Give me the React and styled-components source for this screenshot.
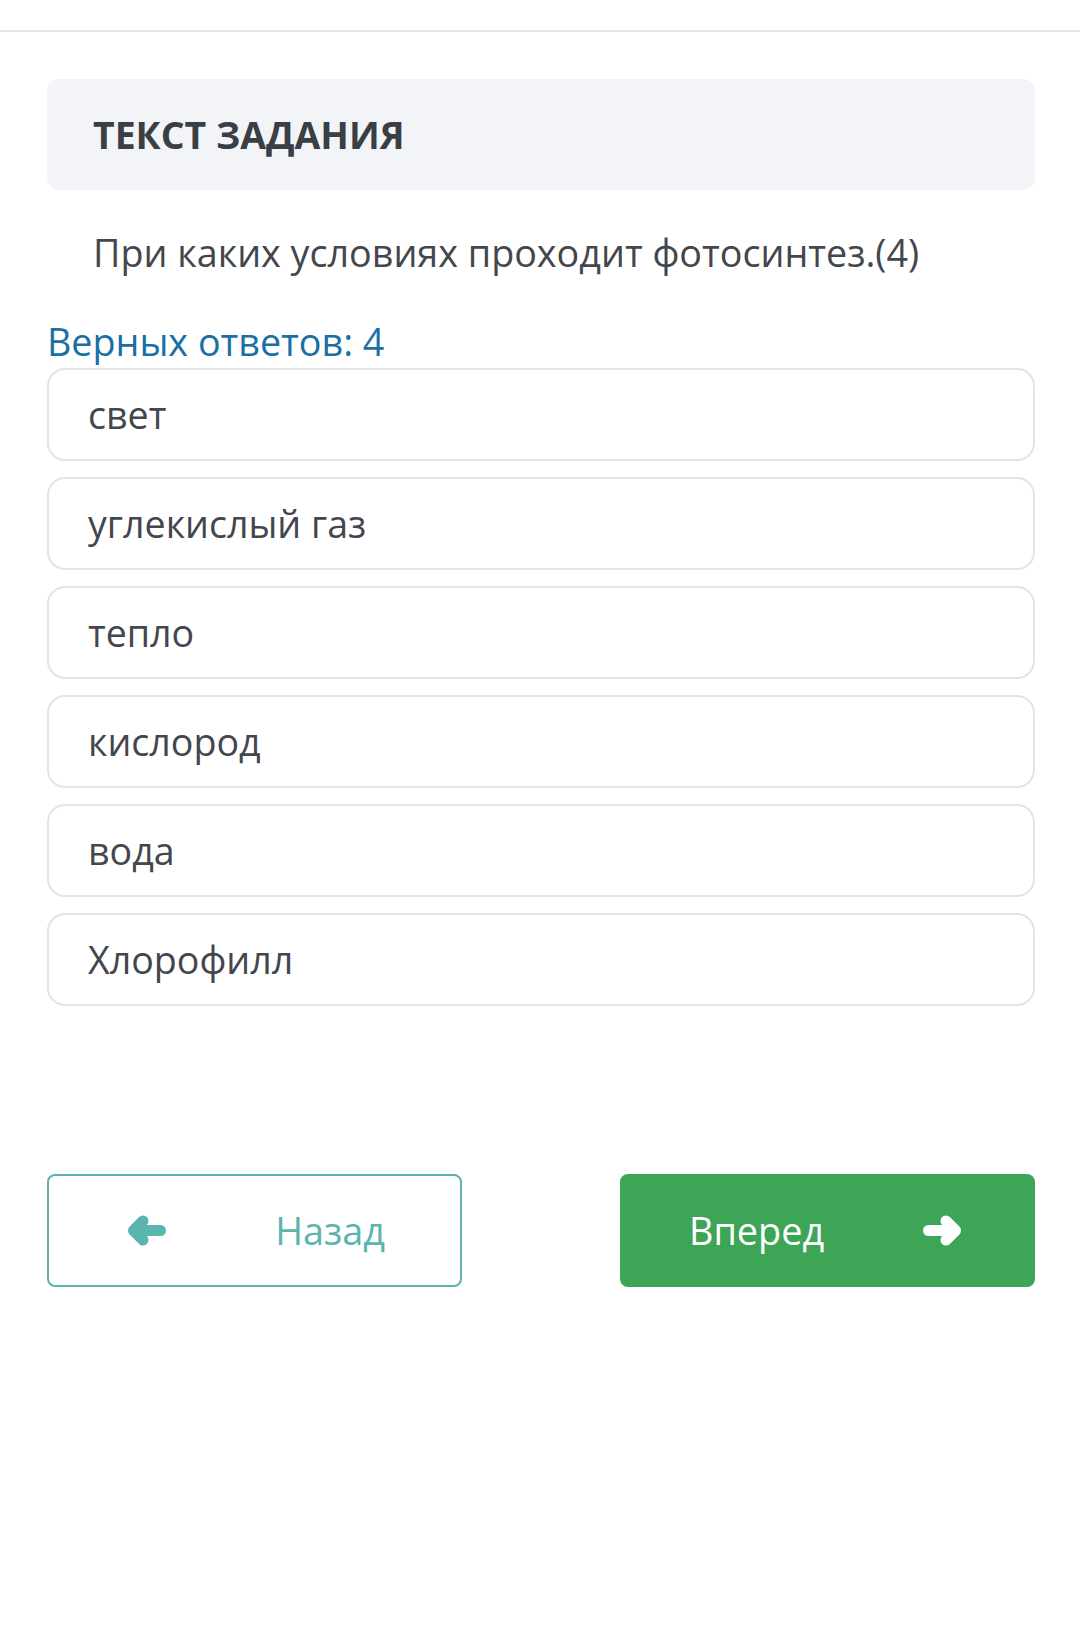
import React from "react";
import styled, { createGlobalStyle } from "styled-components";

const GlobalStyle = createGlobalStyle`
  html, body {
    margin: 0;
    padding: 0;
    background: #ffffff;
  }
  body {
    font-family: "Open Sans", "Noto Sans", sans-serif;
    color: #43474d;
  }
`;

const Page = styled.div`
  width: 1080px;
  min-height: 1636px;
  padding-top: 30px;
  box-sizing: border-box;
`;

const TopRule = styled.div`
  height: 2px;
  background: #e3e4e6;
`;

const Content = styled.main`
  padding: 47px 45px 0 47px;
  display: flex;
  flex-direction: column;
`;

const TaskHeader = styled.div`
  height: 111px;
  background: #f3f4f8;
  border-radius: 12px;
  display: flex;
  align-items: center;
  padding-left: 46px;
`;

const TaskTitle = styled.h2`
  margin: 0;
  font-size: 37.4px;
  font-weight: 700;
  color: #3a3e45;
`;

const Question = styled.p`
  margin: 38px 0 0 46px;
  font-size: 37.7px;
  line-height: 50px;
  color: #43474d;
`;

const AnswerCount = styled.div`
  margin-top: 41px;
  font-size: 37.7px;
  line-height: 46px;
  color: #1a6fa3;
`;

const Options = styled.ul`
  list-style: none;
  margin: 3px 0 0;
  padding: 0;
  display: flex;
  flex-direction: column;
  gap: 16px;
`;

const Option = styled.li`
  height: 93px;
  box-sizing: border-box;
  border: 2px solid #e3e4e6;
  border-radius: 18px;
  display: flex;
  align-items: center;
  padding-left: 39px;
  font-size: 37.6px;
  color: #43474d;
`;

const Nav = styled.nav`
  margin-top: 168px;
  display: flex;
  justify-content: space-between;
`;

const NavButton = styled.button`
  width: 415px;
  height: 113px;
  box-sizing: border-box;
  border-radius: 8px;
  display: flex;
  align-items: center;
  justify-content: space-between;
  padding: ${(p) => (p.$primary ? "0 72px 0 67px" : "0 75px 0 79px")};
  font-family: "Open Sans", "Noto Sans", sans-serif;
  font-size: 37.8px;
  cursor: pointer;
  border: 2px solid ${(p) => (p.$primary ? "#3ca556" : "#5fb3ad")};
  background: ${(p) => (p.$primary ? "#3ca556" : "#ffffff")};
  color: ${(p) => (p.$primary ? "#ffffff" : "#5ab5ae")};
`;

const ArrowSvg = styled.svg`
  width: 38px;
  height: 31px;
  flex: none;
  transform: ${(p) => (p.$right ? "scaleX(-1)" : "none")};
`;

function Arrow({ right }) {
  return (
    <ArrowSvg $right={right} viewBox="0 0 38 31" aria-hidden="true">
      <path
        d="M5.5 15.5 H32.5 M15 6 L5.5 15.5 L15 25"
        fill="none"
        stroke="currentColor"
        strokeWidth="11"
        strokeLinecap="round"
        strokeLinejoin="round"
      />
    </ArrowSvg>
  );
}

const options = [
  "свет",
  "углекислый газ",
  "тепло",
  "кислород",
  "вода",
  "Хлорофилл",
];

export default function App() {
  return (
    <Page>
      <GlobalStyle />
      <TopRule />
      <Content>
        <TaskHeader>
          <TaskTitle>ТЕКСТ ЗАДАНИЯ</TaskTitle>
        </TaskHeader>
        <Question>При каких условиях проходит фотосинтез.(4)</Question>
        <AnswerCount>Верных ответов: 4</AnswerCount>
        <Options>
          {options.map((o) => (
            <Option key={o}>{o}</Option>
          ))}
        </Options>
        <Nav>
          <NavButton>
            <Arrow />
            <span>Назад</span>
          </NavButton>
          <NavButton $primary>
            <span>Вперед</span>
            <Arrow right />
          </NavButton>
        </Nav>
      </Content>
    </Page>
  );
}
